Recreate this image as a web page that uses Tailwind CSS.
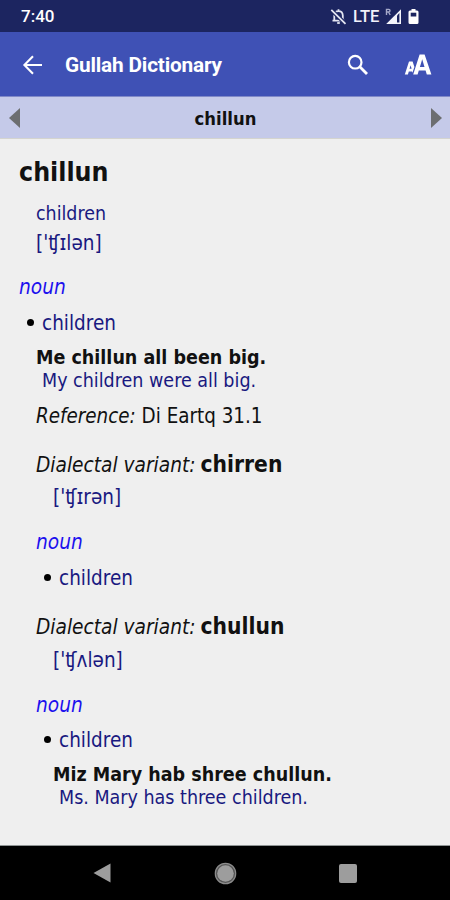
<!DOCTYPE html>
<html lang="en">
<head>
    <meta charset="UTF-8">
    <meta name="viewport" content="width=device-width, initial-scale=1.0">
    <title>Gullah Dictionary</title>
    <script src="https://cdn.jsdelivr.net/npm/@tailwindcss/browser@4"></script>
</head>
<body class="bg-[#efefef]">
    <div class="flex h-[900px] w-[450px] flex-col overflow-hidden bg-[#efefef] font-['DejaVu_Sans_Condensed','DejaVu_Sans',sans-serif] [font-stretch:condensed]">
        <!-- Status bar -->
        <div class="flex h-8 shrink-0 items-center bg-[#1c2560] pl-[21px] font-[Roboto,sans-serif] text-white [font-stretch:normal]">
            <span class="text-[17px] font-medium leading-8">7:40</span>
            <svg class="ml-auto h-[17px] w-[17px]" viewBox="0 0 17 17" fill="none" stroke="#e4e6f2" stroke-width="1.8">
                <path d="M4.3 13V7.5Q4.5 3.2 8.5 3.2Q12.6 3.2 12.8 7.5V13M2.5 12.6H14.5M8.5 1.2V3.2" />
                <path d="M1.3 2L15.5 15.8" stroke="#1c2560" stroke-width="4" />
                <path d="M1.3 1.8L15.5 15.8" />
                <path d="M7.2 15H9.8" />
            </svg>
            <span class="ml-[6px] w-[27px] pt-px text-[16.5px] font-medium leading-8 text-[#f1f2fa]">LTE</span>
            <svg class="ml-[5px] h-[17px] w-[17px]" viewBox="0 0 17 17">
                <path d="M16 1.2V16H1.2Z" fill="#f4f5fb" />
                <path d="M14.4 5V14.4H12V7.4Z" fill="#1c2560" />
                <path d="M1.5 7V1.4H3.8Q5 1.5 5 2.7Q5 4 3.6 4H1.5M3.5 4L5.2 7" fill="none" stroke="#a5a9c9" stroke-width="1.4" />
            </svg>
            <svg class="mr-[31px] ml-[6px] h-[17px] w-[11px]" viewBox="0 0 11 17">
                <path d="M3.5 1H7.5V2.5H9Q10.5 2.5 10.5 4V14.5Q10.5 16 9 16H2Q.5 16 .5 14.5V4Q.5 2.5 2 2.5H3.5Z" fill="#fff" />
                <path d="M2.7 4.7H8.3V8.5H2.7Z" fill="#1c2560" />
            </svg>
        </div>

        <!-- App bar -->
        <div class="flex h-[65px] shrink-0 items-center border-b border-[#8089c8] bg-[#3f51b5] pt-px text-white">
            <svg class="ml-[22px] h-[22px] w-[22px]" viewBox="0 0 22 22" fill="none" stroke="#fff" stroke-width="2.1">
                <path d="M20 11H3M11 2.3L2.4 11L11 19.7" />
            </svg>
            <h1 class="ml-[21px] font-[Roboto,sans-serif] text-[20.8px] font-bold leading-8 tracking-[-0.18px] [font-stretch:normal]">Gullah Dictionary</h1>
            <svg class="ml-auto h-[22px] w-[22px]" viewBox="0 0 22 22" fill="none" stroke="#fff">
                <circle cx="8.2" cy="8.2" r="6.3" stroke-width="2.2" />
                <path d="M12.8 12.8L20 20" stroke-width="2.8" />
            </svg>
            <svg class="mr-[17px] ml-[35px] h-[22px] w-[29px]" viewBox="0 0 29 22" fill="#fff" fill-rule="evenodd">
                <path d="M.8 20.5L5 7.5H8.6L10.4 13L8.4 18.8L8 17.4H4.8L3.9 20.5ZM5.5 14.8H7.6L6.6 11.2Z" />
                <path d="M9.2 20.5L15.6 .5H20.6L27.4 20.5H22.8L21.6 16.4H14.8L13.6 20.5ZM15.9 12.9H20.5L18.2 5.2Z" />
            </svg>
        </div>

        <!-- Entry navigation -->
        <div class="flex h-[42px] shrink-0 items-center justify-between border-b border-[#d4d4cf] bg-[#c5cae9] pr-2 pl-[9px]">
            <svg class="h-5 w-[11px]" viewBox="0 0 11 20"><path d="M11 0V20L0 10Z" fill="#6c6e70" /></svg>
            <span class="pt-[3px] text-[18.3px] font-bold leading-6 text-[#111]">chillun</span>
            <svg class="h-5 w-[11px]" viewBox="0 0 11 20"><path d="M0 0V20L11 10Z" fill="#6c6e70" /></svg>
        </div>

        <!-- Dictionary entry -->
        <main class="grow whitespace-nowrap pt-[17px] pl-[19px] text-[20.5px] leading-6 text-[#111]">
            <h2 class="text-[26.5px] font-bold leading-8">chillun</h2>
            <div class="mt-[14px] pl-[17px] text-[19.4px] text-[#191980]">children</div>
            <div class="mt-[5px] pl-[17px] text-[#191980]">['ʧɪlən]</div>
            <div class="mt-[20px] text-[20.7px] italic text-[#1c10ee]">noun</div>
            <div class="mt-3 flex items-center pl-2">
                <span class="mb-[2px] size-[7px] rounded-full bg-black"></span>
                <span class="ml-2 text-[#191980]">children</span>
            </div>
            <div class="mt-[11px] pl-[17px] text-[19.5px] leading-[23px]">
                <p class="font-bold">Me chillun all been big.</p>
                <p class="pl-[6px] text-[#191980]">My children were all big.</p>
            </div>
            <div class="mt-3 pl-[17px] text-[20.4px]"><i>Reference:</i> Di Eartq 31.1</div>

            <!-- Variant: chirren -->
            <section class="mt-6 pl-[17px]">
                <div class="flex h-6 items-baseline"><i class="text-[20.7px]">Dialectal variant:</i><b class="ml-[5px] text-[22.6px]">chirren</b></div>
                <div class="mt-[9px] pl-[17px] text-[#191980]">['ʧɪrən]</div>
                <div class="mt-[21px] text-[20.7px] italic text-[#1c10ee]">noun</div>
                <div class="mt-3 flex items-center pl-2">
                    <span class="mb-[2px] size-[7px] rounded-full bg-black"></span>
                    <span class="ml-2 text-[#191980]">children</span>
                </div>
            </section>

            <!-- Variant: chullun -->
            <section class="mt-6 pl-[17px]">
                <div class="flex h-6 items-baseline"><i class="text-[20.7px]">Dialectal variant:</i><b class="ml-[5px] text-[22.6px]">chullun</b></div>
                <div class="mt-[10px] pl-[17px] text-[#191980]">['ʧʌlən]</div>
                <div class="mt-[21px] text-[20.7px] italic text-[#1c10ee]">noun</div>
                <div class="mt-[11px] flex items-center pl-2">
                    <span class="mb-[2px] size-[7px] rounded-full bg-black"></span>
                    <span class="ml-2 text-[#191980]">children</span>
                </div>
                <div class="mt-[11px] pl-[17px] text-[19.5px] leading-[23px]">
                    <p class="font-bold">Miz Mary hab shree chullun.</p>
                    <p class="pl-[6px] text-[#191980]">Ms. Mary has three children.</p>
                </div>
            </section>
        </main>

        <!-- System navigation -->
        <div class="flex h-[55px] shrink-0 items-center border-t border-[#8f9494] bg-black pl-[93px]">
            <svg class="h-5 w-[18px]" viewBox="0 0 18 20"><path d="M17.5 .5V19.5L.5 10Z" fill="#9d9d9d" /></svg>
            <svg class="ml-[103px] h-[23px] w-[23px]" viewBox="0 0 23 23">
                <circle cx="11.5" cy="11.5" r="10.2" fill="#555" stroke="#8c8c8c" stroke-width="1.2" />
                <circle cx="11.5" cy="11.5" r="8.3" fill="#9d9d9d" />
            </svg>
            <span class="ml-[102px] h-[19px] w-[18px] rounded-[2px] bg-[#9d9d9d]"></span>
        </div>
    </div>
</body>
</html>
